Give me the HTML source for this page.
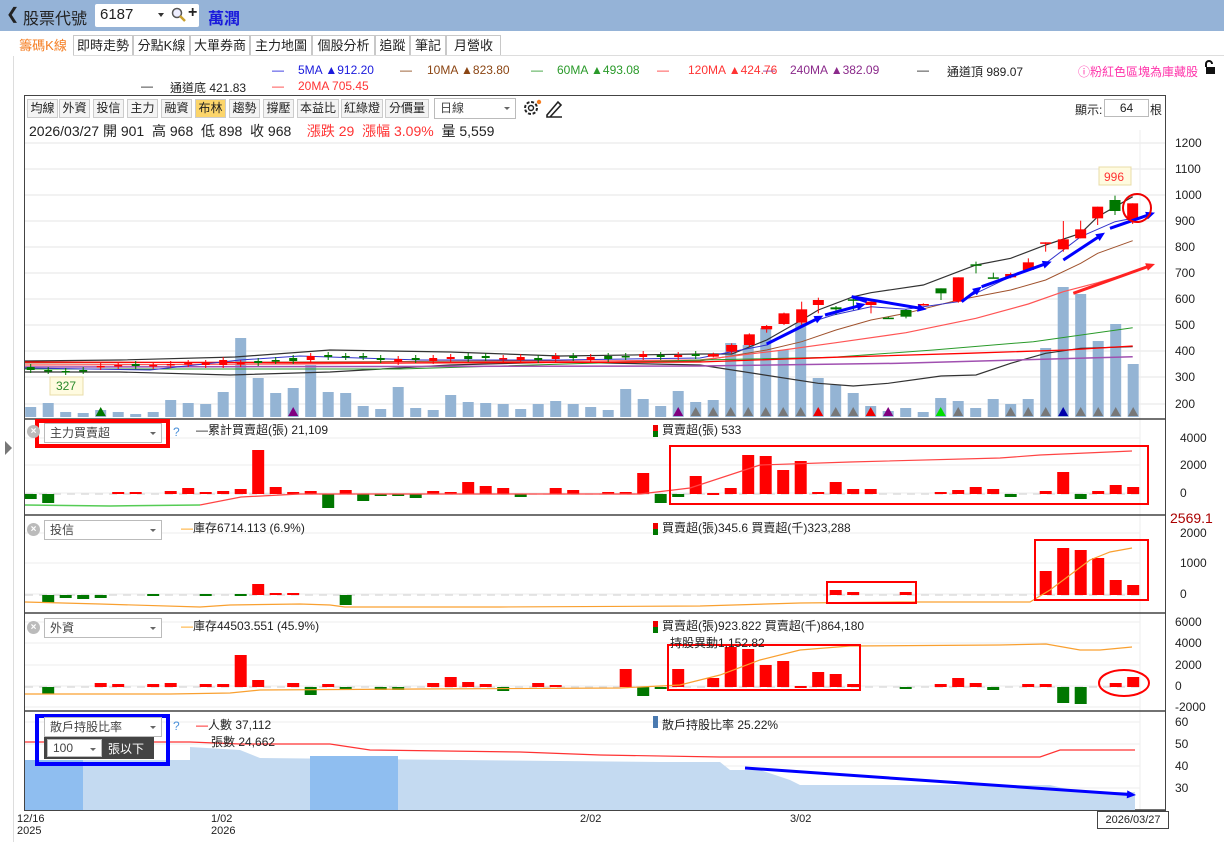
<!DOCTYPE html>
<html><head><meta charset="utf-8">
<style>
*{margin:0;padding:0;box-sizing:border-box}
body{width:1224px;height:842px;overflow:hidden;background:#fff;font-family:"Liberation Sans","Noto Sans CJK TC",sans-serif;position:relative;color:#222}
.hdr{position:absolute;left:0;top:0;width:1224px;height:31px;background:#95b3d7}
.abs{position:absolute;white-space:nowrap}
.tab{position:absolute;top:35px;height:21px;border:1px solid #c8c8c8;background:#fff;font-size:13px;line-height:19px;text-align:center}
.btn{position:absolute;top:99px;height:19px;border:1px solid #ccc;background:#f4f4f4;font-size:12px;line-height:17px;text-align:center}
.dd{position:absolute;height:20px;border:1px solid #bbb;background:#fff;font-size:12px;line-height:18px;padding-left:5px;color:#444}
.dd:after{content:"";position:absolute;right:5px;top:8px;border:3px solid transparent;border-top:3px solid #666}
.x{position:absolute;width:13px;height:13px;border-radius:50%;background:#bbb;color:#fff;font-size:10px;line-height:13px;text-align:center;font-weight:bold}
</style></head><body>
<div class="hdr"></div>
<div class="abs" style="left:6px;top:7px;font-size:16px;line-height:16px;color:#222">&#10094;</div>
<div class="abs" style="left:23px;top:5px;font-size:16px;color:#222">股票代號</div>
<div class="abs" style="left:95px;top:4px;width:104px;height:23px;background:#fff;border-radius:2px"></div>
<div class="abs" style="left:100px;top:6px;font-size:15px;color:#222">6187</div>
<div class="abs" style="left:158px;top:13px;border:3px solid transparent;border-top:4px solid #333"></div>
<svg class="abs" style="left:171px;top:7px" width="16" height="16"><circle cx="6" cy="6" r="4.5" fill="#eef" stroke="#555" stroke-width="1.5"/><line x1="9" y1="9" x2="14" y2="14" stroke="#c8a030" stroke-width="2.5"/></svg>
<div class="abs" style="left:188px;top:4px;font-size:16px;font-weight:bold;color:#222">+</div>
<div class="abs" style="left:208px;top:5px;font-size:16px;font-weight:bold;color:#1a1adc">萬潤</div>

<div class="abs" style="left:13px;top:55px;width:1px;height:787px;background:#ddd"></div>
<div class="tab" style="left:13px;width:60px;border-color:#fff;color:#f57c1f">籌碼K線</div>
<div class="tab" style="left:73px;width:60px">即時走勢</div>
<div class="tab" style="left:133px;width:57px">分點K線</div>
<div class="tab" style="left:190px;width:60px">大單券商</div>
<div class="tab" style="left:250px;width:62px">主力地圖</div>
<div class="tab" style="left:312px;width:63px">個股分析</div>
<div class="tab" style="left:375px;width:35px">追蹤</div>
<div class="tab" style="left:410px;width:36px">筆記</div>
<div class="tab" style="left:446px;width:55px">月營收</div>
<div class="abs" style="left:73px;top:55px;width:1151px;height:1px;background:#ddd"></div>

<div class="abs" style="left:5px;top:441px;border:5px solid transparent;border-left:7px solid #777;border-right:0;height:0;width:0;border-top-width:7px;border-bottom-width:7px"></div>

<div class="abs" style="font-size:12px;top:63px;left:0;width:1224px;height:30px">
<span class="abs" style="left:272px;color:#1a1adc">—</span><span class="abs" style="left:298px;color:#1a1adc">5MA ▲912.20</span>
<span class="abs" style="left:400px;color:#8b4513">—</span><span class="abs" style="left:427px;color:#8b4513">10MA ▲823.80</span>
<span class="abs" style="left:531px;color:#2a9a2a">—</span><span class="abs" style="left:557px;color:#2a9a2a">60MA ▲493.08</span>
<span class="abs" style="left:657px;color:#f33">—</span><span class="abs" style="left:688px;color:#f33">120MA ▲424.76</span>
<span class="abs" style="left:763px;color:#8b2a8b">—</span><span class="abs" style="left:790px;color:#8b2a8b">240MA ▲382.09</span>
<span class="abs" style="left:917px;color:#222">—</span><span class="abs" style="left:947px;color:#222">通道頂 989.07</span>
<span class="abs" style="left:141px;top:16px;color:#222">—</span><span class="abs" style="left:170px;top:16px;color:#222">通道底 421.83</span>
<span class="abs" style="left:272px;top:16px;color:#f33">—</span><span class="abs" style="left:298px;top:16px;color:#f33">20MA 705.45</span>
<span class="abs" style="left:1078px;color:#f3a">ⓘ粉紅色區塊為庫藏股</span>
</div>
<svg class="abs" style="left:1203px;top:59px" width="14" height="16"><path d="M3 8 V5 a3 3 0 0 1 6 0" fill="none" stroke="#111" stroke-width="2"/><rect x="3" y="8" width="9" height="7" fill="#111"/></svg>

<div class="abs" style="left:24px;top:95px;width:1142px;height:716px;border:1px solid #444"></div>
<div class="btn" style="left:27px;width:31px">均線</div>
<div class="btn" style="left:59px;width:31px">外資</div>
<div class="btn" style="left:93px;width:31px">投信</div>
<div class="btn" style="left:127px;width:31px">主力</div>
<div class="btn" style="left:161px;width:31px">融資</div>
<div class="btn" style="left:195px;width:31px;background:#fcd56a">布林</div>
<div class="btn" style="left:229px;width:31px">趨勢</div>
<div class="btn" style="left:263px;width:31px">撐壓</div>
<div class="btn" style="left:297px;width:42px">本益比</div>
<div class="btn" style="left:341px;width:42px">紅綠燈</div>
<div class="btn" style="left:385px;width:44px">分價量</div>
<div class="dd" style="left:434px;top:98px;width:82px;height:21px">日線</div>
<svg class="abs" style="left:522px;top:97px" width="48" height="22"><circle cx="9" cy="11" r="6" fill="none" stroke="#222" stroke-width="2" stroke-dasharray="3 1.7"/><circle cx="9" cy="11" r="2.5" fill="none" stroke="#222" stroke-width="1.4"/><circle cx="17" cy="5" r="2.2" fill="#f57c1f"/><path d="M25 18 L36 5 L39 8 L28 20 L25 20 Z M25 20 H40" fill="none" stroke="#222" stroke-width="1.6"/></svg>
<div class="abs" style="left:1075px;top:101px;font-size:12px">顯示:</div>
<div class="abs" style="left:1104px;top:99px;width:45px;height:18px;border:1px solid #bbb;font-size:12px;text-align:center;line-height:16px">64</div>
<div class="abs" style="left:1150px;top:101px;font-size:12px">根</div>
<div class="abs" style="left:29px;top:121px;font-size:14px;color:#222">2026/03/27 開 901&nbsp; 高 968&nbsp; 低 898&nbsp; 收 968 <span style="color:#f33">&nbsp;&nbsp;&nbsp;漲跌 29&nbsp; 漲幅 3.09%</span>&nbsp; 量 5,559</div>

<svg id="c" class="abs" style="left:0;top:0" width="1224" height="842"></svg>

<div class="x" style="left:27px;top:425px">×</div>
<div class="dd" style="left:44px;top:423px;width:118px">主力買賣超</div>
<div class="abs" style="left:173px;top:425px;font-size:12px;color:#4a90d9">?</div>
<div class="abs" style="left:196px;top:421px;font-size:12px">—累計買賣超(張) 21,109</div>
<div class="abs" style="left:652px;top:421px;font-size:12px">&nbsp;&nbsp;&nbsp;買賣超(張) 533</div>

<div class="x" style="left:27px;top:523px">×</div>
<div class="dd" style="left:44px;top:520px;width:118px">投信</div>
<div class="abs" style="left:181px;top:519px;font-size:12px"><span style="color:#f90">—</span>庫存6714.113 (6.9%)</div>
<div class="abs" style="left:652px;top:519px;font-size:12px">&nbsp;&nbsp;&nbsp;買賣超(張)345.6 買賣超(千)323,288</div>
<div class="abs" style="left:1170px;top:510px;font-size:14px;color:#a00">2569.1</div>

<div class="x" style="left:27px;top:621px">×</div>
<div class="dd" style="left:44px;top:618px;width:118px">外資</div>
<div class="abs" style="left:181px;top:617px;font-size:12px"><span style="color:#f90">—</span>庫存44503.551 (45.9%)</div>
<div class="abs" style="left:652px;top:617px;font-size:12px">&nbsp;&nbsp;&nbsp;買賣超(張)923.822 買賣超(千)864,180</div>
<div class="abs" style="left:670px;top:634px;font-size:12px">持股異動1,152.82</div>

<div class="dd" style="left:44px;top:717px;width:118px">散戶持股比率</div>
<div class="abs" style="left:44px;top:737px;width:110px;height:22px;background:#444"></div>
<div class="dd" style="left:47px;top:739px;width:55px;height:18px;line-height:16px">100</div>
<div class="abs" style="left:108px;top:740px;font-size:12px;color:#fff">張以下</div>
<div class="abs" style="left:173px;top:719px;font-size:12px;color:#4a90d9">?</div>
<div class="abs" style="left:196px;top:716px;font-size:12px"><span style="color:#f00">—</span>人數 37,112</div>
<div class="abs" style="left:211px;top:733px;font-size:12px">張數 24,662</div>
<div class="abs" style="left:652px;top:716px;font-size:12px">&nbsp;&nbsp;&nbsp;散戶持股比率 25.22%</div>

<div class="abs" style="left:17px;top:813px;font-size:11px;line-height:12px">12/16<br>2025</div>
<div class="abs" style="left:211px;top:813px;font-size:11px;line-height:12px">1/02<br>2026</div>
<div class="abs" style="left:580px;top:813px;font-size:11px">2/02</div>
<div class="abs" style="left:790px;top:813px;font-size:11px">3/02</div>
<div class="abs" style="left:1097px;top:811px;width:72px;height:18px;border:1px solid #444;font-size:11px;text-align:center;line-height:16px;background:#fff">2026/03/27</div>

<script>
var s='';
function L(x1,y1,x2,y2,c,w,extra){s+='<line x1="'+x1+'" y1="'+y1+'" x2="'+x2+'" y2="'+y2+'" stroke="'+c+'" stroke-width="'+(w||1)+'" '+(extra||'')+'/>';}
function R(x,y,w,h,f,extra){s+='<rect x="'+x+'" y="'+y+'" width="'+w+'" height="'+h+'" fill="'+f+'" '+(extra||'')+'/>';}
function T(x,y,t,c,sz){s+='<text x="'+x+'" y="'+y+'" font-size="'+(sz||12)+'" fill="'+(c||'#222')+'" font-family="Liberation Sans,sans-serif">'+t+'</text>';}
function P(pts,c,w,fill){s+='<polyline points="'+pts+'" fill="'+(fill||'none')+'" stroke="'+c+'" stroke-width="'+(w||1)+'"/>';}
function X(i){return 30.7+i*17.5;}
var gy=[143,169,195,221,247,273,299,325,351,377,404];
gy.forEach(function(y){L(25,y,1165,y,'#eee',1.5);});
['1200','1100','1000','900','800','700','600','500','400','300','200'].forEach(function(t,k){T(1175,gy[k]+4,t,'#222',12);});
L(1140,130,1140,810,'#eee',1);
[419,515,613,711].forEach(function(y){L(24,y,1166,y,'#444',1.5);});
L(24,810,1166,810,'#444',1.5);
var vt=[407,403,412,413,410,412,414,412,400,403,404,392,338,378,393,388,365,392,393,406,409,387,408,410,395,402,403,404,409,404,401,404,407,410,389,399,406,391,402,400,
343,345,328,350,323,378,385,393,406,411,408,412,398,401,408,399,404,399,348,287,294,341,324,364];
vt.forEach(function(t,i){R(X(i)-5.5,t,11,417-t,'#94b4d4');});
var tri={38:'#777',39:'#777',40:'#777',41:'#777',42:'#777',43:'#777',44:'#777',45:'#e00',46:'#777',47:'#777',48:'#e00',49:'#800080',52:'#0d0',53:'#777',56:'#777',57:'#777',58:'#777',59:'#00a',60:'#777',61:'#777',62:'#777',63:'#777',4:'#070',15:'#800080',37:'#800080'};
for(var k in tri){var x=X(+k);s+='<polygon points="'+(x-5)+',416 '+(x+5)+',416 '+x+',407" fill="'+tri[k]+'"/>';}
function zp(arr){return arr.map(function(p){return (700+p[0]/3).toFixed(1)+','+(150+p[1]/3).toFixed(1);}).join(' ');}
P('25,361 120,360 235,357 330,350 450,352 560,356 700,354 '+zp([[95,612],[200,570],[305,510],[355,480],[460,440],[513,428],[670,405],[775,365],[828,345],[932,325],[1037,285],[1142,250],[1193,200],[1298,140]]),'#333',1.2);
P('25,372 120,372 230,375 330,372 450,365 560,362 700,365 '+zp([[355,700],[460,708],[565,700],[723,678],[828,675],[932,640],[1037,610],[1142,595],[1298,590]]),'#333',1.2);
P('25,363 300,362 500,361 700,361 '+zp([[200,600],[305,575],[408,540],[513,510],[618,490],[775,450],[932,420],[1037,390],[1142,340],[1193,310],[1298,272]]),'#a0522d',1);
P('25,365 300,364 500,362 700,360 '+zp([[250,600],[408,578],[618,548],[828,505],[985,462],[1090,425],[1193,398],[1298,366]]),'#f55',1.2);
P('25,369 400,369 700,360 '+zp([[400,622],[700,600],[1000,575],[1298,533]]),'#2a9a2a',1);
P('25,362 400,363 700,362 '+zp([[400,622],[800,610],[1100,600],[1298,588]]),'#f00',1.3);
P('25,367 700,366 '+zp([[600,640],[1298,620]]),'#a050b0',1.5);
P('25,368 150,370 240,360 300,356 420,360 560,360 700,358 '+zp([[95,605],[200,585],[305,525],[400,495],[513,470],[618,478],[775,455],[932,380],[1037,340],[1142,260],[1245,215],[1298,205]]),'#33c',1);
var lc=[[367,370,'g'],[370,371,'g'],[371,372,'g'],[370,371,'g'],[366,367,'r'],[365,366,'r'],[364,366,'g'],[365,366,'r'],[364,365,'r'],[363,364,'r'],[363,365,'r'],[360,365,'r'],[363,364,'r'],[361,363,'g'],[360,361,'g'],[358,361,'g'],[356,360,'r'],[355,357,'g'],[356,357,'g'],[356,357,'g'],[358,360,'g'],[359,362,'r'],[358,360,'g'],[358,361,'r'],[357,359,'r'],[356,359,'g'],[356,358,'g'],[358,359,'r'],[357,360,'r'],[358,360,'g'],[356,359,'r'],[356,358,'g'],[357,360,'r'],[356,359,'g'],[356,357,'g'],[354,357,'r'],[355,357,'g'],[355,357,'r'],[354,356,'g']];
lc.forEach(function(c,i){var x=X(i),col=c[2]=='r'?'#f00':'#070';L(x,c[0]-3,x,c[1]+3,col,1);R(x-4,c[0],8,Math.max(1.5,c[1]-c[0]),col);});
var rc=[[40,612,620,'r',608,622],[95,585,605,'r',580,610],[148,553,585,'r',550,590],[200,528,538,'r',525,548],[252,490,522,'r',488,525],[305,478,518,'r',455,525],[355,450,465,'r',443,490],[408,472,478,'g',468,495],[460,448,452,'g',440,480],[513,455,465,'r',455,490],[565,503,506,'g',500,507],[618,480,500,'g',478,505],[670,462,465,'r',460,467],[723,415,430,'g',415,450],[775,382,455,'r',382,458],[828,343,345,'g',335,370],[880,382,384,'g',368,385],[932,372,382,'r',368,385],[985,337,360,'r',325,360],[1037,277,280,'r',277,305],[1090,268,298,'r',213,305],[1142,238,265,'r',212,265],[1193,170,205,'r',170,225],[1245,150,183,'g',137,195],[1298,160,210,'r',160,222]];
rc.forEach(function(c){var x=700+c[0]/3,col=c[3]=='r'?'#f00':'#070';L(x,150+c[4]/3,x,150+c[5]/3,col,1);R(x-5.5,150+c[1]/3,11,Math.max(1.5,(c[2]-c[1])/3),col);});
function A(x1,y1,x2,y2,c,w){var a=Math.atan2(y2-y1,x2-x1),h=9;L(x1,y1,x2-Math.cos(a)*5,y2-Math.sin(a)*5,c,w);
s+='<polygon points="'+x2+','+y2+' '+(x2-h*Math.cos(a)+4*Math.sin(a))+','+(y2-h*Math.sin(a)-4*Math.cos(a))+' '+(x2-h*Math.cos(a)-4*Math.sin(a))+','+(y2-h*Math.sin(a)+4*Math.cos(a))+'" fill="'+c+'"/>';}
function Z(a,b,c,d,col){A(700+a/3,150+b/3,700+c/3,150+d/3,col,3);}
Z(200,582,370,497,'#00f');Z(375,495,497,462,'#00f');Z(455,440,680,478,'#00f');L(700+455/3,150+440/3,700+500/3,150+455/3,'#00f',3);
Z(785,455,845,410,'#00f');Z(845,410,1055,335,'#00f');Z(1090,330,1215,248,'#00f');Z(1230,235,1365,188,'#00f');Z(1120,430,1365,342,'#f22');
s+='<circle cx="1137" cy="208" r="14" fill="none" stroke="#e00" stroke-width="2"/>';
s+='<rect x="1099" y="167" width="32" height="18" fill="#fffbe0" stroke="#e8dca8"/><text x="1104" y="181" font-size="12" fill="#f33">996</text>';
s+='<rect x="50" y="377" width="33" height="18" fill="#fffbe0" stroke="#e8dca8"/><text x="56" y="390" font-size="12" fill="#2a8a2a">327</text>';
[[4000,438],[2000,465],[0,493]].forEach(function(v){T(1180,v[1]+4,v[0]);L(25,v[1],1140,v[1],'#eee',1);});
L(25,494,1140,494,'#ddd',1.5,'stroke-dasharray="8 6"');
var p1={0:[494,499],1:[494,503],5:[492,494],6:[492,494],8:[491,494],9:[488,494],10:[492,494],11:[491,494],12:[489,494],13:[450,494],14:[487,494],15:[492,494],16:[491,494],17:[494,508],18:[490,494],19:[494,501],20:[494,496],21:[494,496],22:[494,498],23:[491,494],24:[492,494],25:[482,494],26:[486,494],27:[488,494],28:[494,497],30:[488,494],31:[490,494],33:[492,494],34:[492,494],35:[473,494],36:[494,503],37:[494,497],38:[476,494],39:[493,495],40:[488,494],41:[455,494],42:[456,494],43:[470,494],44:[461,494],45:[492,494],46:[482,494],47:[489,494],48:[489,494],52:[492,494],53:[490,494],54:[487,494],55:[489,494],56:[494,497],58:[491,494],59:[472,494],60:[494,499],61:[491,494],62:[485,494],63:[487,494]};
function bars(o,zero){for(var k in o){var v=o[k];if(!v[1])continue;var x=X(+k);var col=v[0]<zero?'#f00':'#070';R(x-6,v[0],12,Math.max(2,v[1]-v[0]),col);}}
bars(p1,494);
P('25,505 110,506 200,505','#5c5',1.5);P('200,505 241,497 300,494 640,494 690,488 760,465 850,462 1000,458 1040,455 1132,451','#f44',1.2);
s+='<rect x="670" y="446" width="478" height="58" fill="none" stroke="#f00" stroke-width="2"/>';
s+='<rect x="37" y="421" width="131" height="25" fill="none" stroke="#f00" stroke-width="4"/>';
[[2000,533],[1000,563],[0,594]].forEach(function(v){T(1180,v[1]+4,v[0]);L(25,v[1],1140,v[1],'#eee',1);});
L(25,595,1140,595,'#ddd',1.5,'stroke-dasharray="8 6"');
bars({1:[595,603],2:[595,598],3:[595,599],4:[595,598],7:[594,596],10:[594,596],12:[594,596],13:[584,595],14:[593,595],15:[593,595],18:[595,605],46:[590,595],47:[592,595],50:[592,595],58:[571,595],59:[548,595],60:[550,595],61:[558,595],62:[580,595],63:[585,595]},594);
P('25,602 100,604 200,607 230,605 300,604 330,605 345,607 500,607 700,606 800,603 900,602 1030,602 1050,590 1070,575 1090,560 1110,552 1132,548','#f9a030',1.2);
s+='<rect x="827" y="582" width="89" height="21" fill="none" stroke="#f00" stroke-width="2"/><rect x="1035" y="540" width="113" height="60" fill="none" stroke="#f00" stroke-width="2"/>';
[[6000,622],[4000,643],[2000,665],[0,686],[-2000,707]].forEach(function(v){T(1175,v[1]+4,v[0]);L(25,v[1],1140,v[1],'#eee',1);});
L(25,687,1140,687,'#ddd',1.5,'stroke-dasharray="8 6"');
bars({1:[687,694],4:[683,687],5:[684,687],7:[684,687],8:[683,687],10:[684,687],11:[684,687],12:[655,687],13:[680,687],15:[683,687],16:[687,695],17:[684,687],18:[687,689],20:[687,690],21:[687,690],23:[683,687],24:[677,687],25:[682,687],26:[684,687],27:[687,691],29:[683,687],30:[685,687],34:[669,687],35:[687,696],36:[687,689],37:[669,687],39:[678,687],40:[647,687],41:[649,687],42:[665,687],43:[661,687],44:[686,688],45:[672,687],46:[674,687],47:[684,687],50:[687,689],52:[684,687],53:[678,687],54:[683,687],55:[687,690],57:[684,687],58:[684,687],59:[687,703],60:[687,704],62:[683,687],63:[677,687]},687);
P('25,694 170,694 230,693 260,690 420,689 620,688 680,685 720,675 760,660 800,650 850,646 1000,645 1046,644 1080,650 1100,650 1132,647','#f9a030',1.2);
s+='<rect x="668" y="645" width="192" height="45" fill="none" stroke="#f00" stroke-width="2"/>';
s+='<ellipse cx="1124" cy="683" rx="25" ry="13" fill="none" stroke="#f00" stroke-width="2"/>';
[[60,722],[50,744],[40,766],[30,788]].forEach(function(v){T(1175,v[1]+4,v[0]);L(25,v[1],1140,v[1],'#eee',1);});
P('25,760 83,760 190,760 190,747 240,750 260,758 660,762 720,762 730,770 760,770 790,780 800,785 1050,785 1080,792 1135,792 1135,810 25,810','none',0,'#c4daf1');
R(25,760,58,50,'#8fbef0');R(310,756,88,54,'#8fbef0');
P('25,742 190,742 240,744 330,744 370,750 520,752 600,755 720,757 860,757 1040,757 1060,750 1135,750','#f33',1.2);
A(745,768,1136,795,'#00f',3);
s+='<rect x="37" y="716" width="131" height="48" fill="none" stroke="#00f" stroke-width="4"/>';
[[653,425],[653,523],[653,621]].forEach(function(p){R(p[0],p[1],5,6,'#e00');R(p[0],p[1]+6,5,6,'#070');});
R(653,716,5,12,'#4a7ab0');
document.getElementById('c').innerHTML=s;
</script>
</body></html>
